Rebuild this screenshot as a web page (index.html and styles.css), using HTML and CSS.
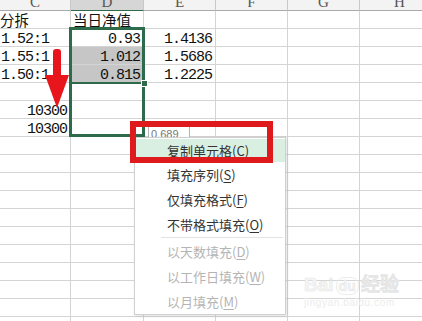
FILE: index.html
```html
<!DOCTYPE html>
<html lang="zh-CN">
<head>
  <meta charset="UTF-8" />
  <title>填充选项</title>
  <link rel="stylesheet" href="styles.css">
</head>
<body>
  <div class="sheet">
    <div class="row head">
      <div class="cell">C</div><div class="cell on">D</div><div class="cell">E</div><div class="cell">F</div><div class="cell">G</div><div class="cell">H</div>
    </div>
    <div class="row">
      <div class="cell cn">分拆</div><div class="cell cn">当日净值</div><div class="cell"></div><div class="cell"></div><div class="cell"></div><div class="cell"></div>
    </div>
    <div class="row">
      <div class="cell">1.52:1</div><div class="cell num">0.93</div><div class="cell num">1.4136</div><div class="cell"></div><div class="cell"></div><div class="cell"></div>
    </div>
    <div class="row">
      <div class="cell">1.55:1</div><div class="cell num grey">1.012</div><div class="cell num">1.5686</div><div class="cell"></div><div class="cell"></div><div class="cell"></div>
    </div>
    <div class="row">
      <div class="cell">1.50:1</div><div class="cell num grey">0.815</div><div class="cell num">1.2225</div><div class="cell"></div><div class="cell"></div><div class="cell"></div>
    </div>
    <div class="row">
      <div class="cell"></div><div class="cell"></div><div class="cell"></div><div class="cell"></div><div class="cell"></div><div class="cell"></div>
    </div>
    <div class="row">
      <div class="cell num">10300</div><div class="cell"></div><div class="cell"></div><div class="cell"></div><div class="cell"></div><div class="cell"></div>
    </div>
    <div class="row">
      <div class="cell num">10300</div><div class="cell"></div><div class="cell"></div><div class="cell"></div><div class="cell"></div><div class="cell"></div>
    </div>
    <div class="row"><div class="cell"></div><div class="cell"></div><div class="cell"></div><div class="cell"></div><div class="cell"></div><div class="cell"></div></div>
    <div class="row"><div class="cell"></div><div class="cell"></div><div class="cell"></div><div class="cell"></div><div class="cell"></div><div class="cell"></div></div>
    <div class="row"><div class="cell"></div><div class="cell"></div><div class="cell"></div><div class="cell"></div><div class="cell"></div><div class="cell"></div></div>
    <div class="row"><div class="cell"></div><div class="cell"></div><div class="cell"></div><div class="cell"></div><div class="cell"></div><div class="cell"></div></div>
    <div class="row"><div class="cell"></div><div class="cell"></div><div class="cell"></div><div class="cell"></div><div class="cell"></div><div class="cell"></div></div>
    <div class="row"><div class="cell"></div><div class="cell"></div><div class="cell"></div><div class="cell"></div><div class="cell"></div><div class="cell"></div></div>
    <div class="row"><div class="cell"></div><div class="cell"></div><div class="cell"></div><div class="cell"></div><div class="cell"></div><div class="cell"></div></div>
    <div class="row"><div class="cell"></div><div class="cell"></div><div class="cell"></div><div class="cell"></div><div class="cell"></div><div class="cell"></div></div>
    <div class="row"><div class="cell"></div><div class="cell"></div><div class="cell"></div><div class="cell"></div><div class="cell"></div><div class="cell"></div></div>
    <div class="row"><div class="cell"></div><div class="cell"></div><div class="cell"></div><div class="cell"></div><div class="cell"></div><div class="cell"></div></div>
    <div class="row"><div class="cell"></div><div class="cell"></div><div class="cell"></div><div class="cell"></div><div class="cell"></div><div class="cell"></div></div>
  </div>

  <!-- selection + fill area -->
  <div class="selection">
    <div class="split"></div>
    <div class="handle"></div>
  </div>

  <svg class="arrow" width="26" height="62" viewBox="0 0 26 62">
    <rect x="9" y="1" width="8" height="30" rx="3" fill="#e8151c"/>
    <polygon points="1,27 25,27 13,60" fill="#e8151c"/>
  </svg>

  <div class="tip">0.689</div>

  <ul class="menu">
    <li class="hot">复制单元格(C)</li>
    <li>填充序列(<u>S</u>)</li>
    <li>仅填充格式(<u>F</u>)</li>
    <li>不带格式填充(<u>O</u>)</li>
    <li class="sep"></li>
    <li class="off">以天数填充(<u>D</u>)</li>
    <li class="off">以工作日填充(<u>W</u>)</li>
    <li class="off">以月填充(<u>M</u>)</li>
  </ul>

  <div class="redbox"></div>

  <div class="mark">
    <div class="logo">Bai<span class="du">du</span>经验</div>
    <div class="site">jingyan.baidu.com</div>
  </div>
</body>
</html>
```
FILE: styles.css
```css
body {
  margin: 0;
  width: 422px;
  height: 321px;
  overflow: hidden;
  background: #fff;
  position: relative;
  font-family: "Liberation Mono", "Noto Sans CJK SC", monospace;
  color: #111;
}

.sheet {
  display: flex;
  flex-direction: column;
}

.row {
  display: grid;
  grid-template-columns: 71px 73px 72px 72px 72px 80px;
  height: 18px;
}

.cell {
  box-sizing: border-box;
  border-right: 1px solid #d4d4d4;
  border-bottom: 1px solid #d4d4d4;
  padding: 1px 3px 0 1px;
  font-size: 15px;
  letter-spacing: -1px;
  line-height: 19px;
  white-space: nowrap;
  overflow: hidden;
}

.cn {
  font-family: "Noto Sans CJK SC", sans-serif;
  letter-spacing: 0;
  font-size: 14.5px;
  line-height: 17px;
  padding: 0;
}
.cn + .cn {
  padding-left: 2px;
}

.num {
  text-align: right;
}

.grey {
  background: #c6c6c6;
}

.head {
  height: 11px;
}
.head .cell {
  background: #f3f3f3;
  border-bottom-color: #aaa;
  border-right-color: #c8c8c8;
  text-align: center;
  font-family: "Liberation Serif", serif;
  font-size: 15px;
  letter-spacing: 0;
  line-height: 4px;
  padding: 0;
  color: #555;
}
.head .on {
  background: #d6d6d6;
  border-bottom: 1px solid #2d6b4b;
}

.selection {
  position: absolute;
  left: 69px;
  top: 27px;
  width: 76px;
  height: 110px;
  box-sizing: border-box;
  border: 3px solid #2d6b4b;
}
.selection .split {
  position: absolute;
  left: -3px;
  right: -3px;
  top: 52px;
  height: 2px;
  background: #2d6b4b;
}
.selection .handle {
  position: absolute;
  right: -6px;
  top: 50px;
  width: 5px;
  height: 5px;
  background: #2d6b4b;
  border: 1px solid #fff;
}

.arrow {
  position: absolute;
  left: 44px;
  top: 48px;
}

.tip {
  position: absolute;
  left: 148px;
  top: 126px;
  width: 42px;
  height: 14px;
  box-sizing: border-box;
  border: 1px solid #b5b5b5;
  background: #fff;
  font-family: "Liberation Sans", sans-serif;
  font-size: 11px;
  line-height: 14px;
  color: #777;
  padding-left: 2px;
}

.menu {
  position: absolute;
  left: 134px;
  top: 137px;
  width: 150px;
  margin: 0;
  padding: 1px 0 0;
  list-style: none;
  background: #fff;
  border: 1px solid #d0d0d0;
  box-shadow: 1px 1px 3px rgba(0, 0, 0, 0.12);
  font-family: "Noto Sans CJK SC", sans-serif;
  font-size: 13px;
  color: #333;
}
.menu li {
  height: 25px;
  line-height: 25px;
  padding-left: 32px;
}
.menu .hot {
  background: #d8efe2;
  height: 23px;
  line-height: 23px;
}
.menu .sep {
  height: 1px;
  margin: 0 2px 1px 26px;
  padding: 0;
  background: #e3e3e3;
}
.menu .off {
  color: #b4b4b4;
}
.menu u {
  text-underline-offset: 2px;
}

.redbox {
  position: absolute;
  left: 130px;
  top: 121px;
  width: 143px;
  height: 42px;
  box-sizing: border-box;
  border: 6px solid #df1a1d;
}

.mark {
  position: absolute;
  left: 304px;
  top: 274px;
  color: #f6f6f6;
  font-family: "Liberation Sans", sans-serif;
}
.mark .logo {
  font-size: 19px;
  font-weight: bold;
  line-height: 22px;
  -webkit-text-stroke: 0.6px #e6e6e6;
}
.mark .du {
  display: inline-block;
  margin: 0 2px;
  padding: 0 2px;
  border-radius: 8px;
  border: 1px solid #ececec;
  font-size: 14px;
  line-height: 16px;
}
.mark .site {
  font-size: 10px;
  line-height: 14px;
  color: #ececec;
  letter-spacing: 0.6px;
}
```
